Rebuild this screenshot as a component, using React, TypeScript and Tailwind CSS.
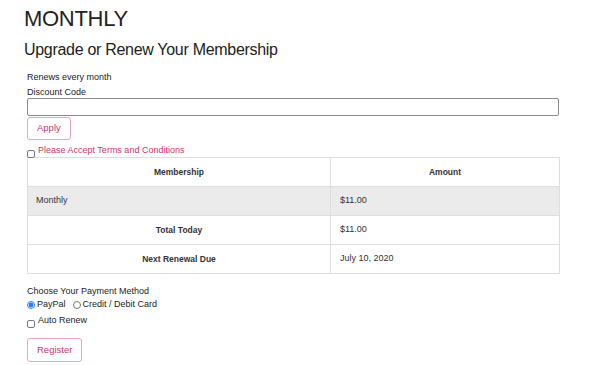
export default function App() {
  return (
    <div className="w-[600px] h-[365px] bg-white text-[#222] font-['Liberation_Sans',Arial,sans-serif] overflow-hidden">
      <div className="pl-[24px] pt-[5px]">
        <h1 className="text-[22px] leading-[28px] tracking-[-0.3px]">MONTHLY</h1>
        <h2 className="text-[16px] leading-[20px] tracking-[-0.3px] mt-[7px]">Upgrade or Renew Your Membership</h2>
      </div>
      <div className="pl-[27px] mt-[11px] text-[9px] text-[#222]">
        <p className="leading-[12px]">Renews every month</p>
        <label className="block leading-[11px] mt-[4px]">Discount Code</label>
        <input className="block w-[532px] h-[18px] border border-[#8c8c8c] rounded-[2px]" />
        <button className="block mt-[1px] h-[23px] px-[9px] border border-[#e9a6bf] rounded-[3px] text-[#d2346e] text-[9.5px]">
          Apply
        </button>
        <div className="flex items-start mt-[5px] h-[12px]">
          <input type="checkbox" className="appearance-none w-[8px] h-[8px] mt-[5px] m-0 border border-[#7a7a7a] rounded-[2px] bg-white" />
          <span className="ml-[3px] text-[#d2346e] leading-[11px]">Please Accept Terms and Conditions</span>
        </div>
        <table className="w-[533px] border-collapse text-[9px] text-[#333]">
          <thead>
            <tr className="h-[29px]">
              <th className="border border-[#dedede] w-[303px] font-bold text-[8.5px]">Membership</th>
              <th className="border border-[#dedede] font-bold text-[8.5px]">Amount</th>
            </tr>
          </thead>
          <tbody>
            <tr className="h-[29px] bg-[#ebebeb]">
              <td className="border border-[#dedede] px-[8px]">Monthly</td>
              <td className="border border-[#dedede] px-[9px]">$11.00</td>
            </tr>
            <tr className="h-[29px]">
              <td className="border border-[#dedede] text-center font-bold text-[8.5px]">Total Today</td>
              <td className="border border-[#dedede] px-[9px]">$11.00</td>
            </tr>
            <tr className="h-[29px]">
              <td className="border border-[#dedede] text-center font-bold text-[8.5px]">Next Renewal Due</td>
              <td className="border border-[#dedede] px-[9px]">July 10, 2020</td>
            </tr>
          </tbody>
        </table>
        <p className="mt-[11px] leading-[12px]">Choose Your Payment Method</p>
        <div className="flex items-center mt-[2px] h-[12px]">
          <input type="radio" name="pay" defaultChecked className="w-[8px] h-[8px] m-0 accent-[#2f7cf6]" />
          <span className="ml-[2px]">PayPal</span>
          <input type="radio" name="pay" className="w-[8px] h-[8px] m-0 ml-[7px]" />
          <span className="ml-[2px]">Credit / Debit Card</span>
        </div>
        <div className="flex items-start mt-[4px] h-[12px]">
          <input type="checkbox" className="appearance-none w-[8px] h-[8px] mt-[5px] m-0 border border-[#7a7a7a] rounded-[2px] bg-white" />
          <span className="ml-[3px] leading-[11px]">Auto Renew</span>
        </div>
        <button className="block mt-[11px] h-[24px] px-[9px] border border-[#e9a6bf] rounded-[3px] text-[#d2346e] text-[9.5px]">
          Register
        </button>
      </div>
    </div>
  );
}
